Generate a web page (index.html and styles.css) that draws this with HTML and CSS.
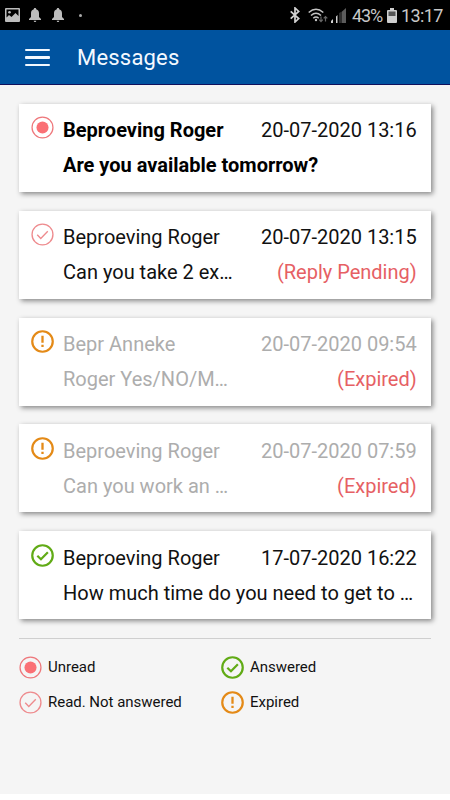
FILE: index.html
```html
<!DOCTYPE html>
<html lang="en">
<head>
<meta charset="utf-8">
<title>Messages</title>
<link rel="stylesheet" href="styles.css">
</head>
<body>
<svg width="0" height="0" class="defs" aria-hidden="true">
  <symbol id="unread" viewBox="0 0 24 24"><circle cx="12" cy="12" r="10.9" fill="none" stroke="#ee777b" stroke-width="1.3"/><circle cx="12" cy="12" r="6.3" fill="#fa7075"/></symbol>
  <symbol id="read" viewBox="0 0 24 24"><circle cx="12" cy="12" r="10.9" fill="none" stroke="#ee8b8e" stroke-width="1.4"/><path d="M6.5 12.3l3.7 3.8 7.3-7.5" fill="none" stroke="#ee8b8e" stroke-width="1.4"/></symbol>
  <symbol id="expired" viewBox="0 0 24 24"><circle cx="12" cy="12" r="10.7" fill="none" stroke="#e48a17" stroke-width="2.3"/><path d="M12 6v7.4M12 15.4v2.3" fill="none" stroke="#e48a17" stroke-width="2.4"/></symbol>
  <symbol id="answered" viewBox="0 0 24 24"><circle cx="12" cy="12" r="10.7" fill="none" stroke="#61ab16" stroke-width="2.3"/><path d="M6.6 12.2l3.8 3.7 7.2-7.4" fill="none" stroke="#61ab16" stroke-width="2.3"/></symbol>
  <symbol id="bell" viewBox="0 0 12 14"><path d="M6 0c.8 0 1.2.5 1.2 1.2C9.300 1.800 10 3.500 10 5.500V9l2 2v1H0v-1l2-2V5.500c0-2 .7-3.700 2.800-4.300C4.800.5 5.200 0 6 0zM4.700 12.800h2.600C7.200 13.600 6.700 14 6 14s-1.200-.4-1.300-1.200z" fill="#bdbdbd"/></symbol>
</svg>

<div class="status">
  <div class="notices">
    <svg class="photo" viewBox="0 0 15 14"><path fill-rule="evenodd" d="M1 0h13q1 0 1 1v12q0 1-1 1H1q-1 0-1-1V1q0-1 1-1zm.5 1.500v8L4 7l2.500 2 4-4 3 3V1.500z" fill="#bdbdbd"/><circle cx="4.500" cy="4.200" r="1.300" fill="#bdbdbd"/></svg>
    <svg class="bell"><use href="#bell"/></svg>
    <svg class="bell"><use href="#bell"/></svg>
    <i class="dot"></i>
  </div>
  <div class="system">
    <svg class="bluetooth" viewBox="0 0 10 16"><path d="M.7 4.300l8 7.200L5 15V1l3.700 3.500-8 7.200" fill="none" stroke="#d2d2d2" stroke-width="1.700"/></svg>
    <svg class="wifi" viewBox="0 0 20 15"><g fill="none" stroke="#c4c4c4" stroke-width="1.500"><path d="M.7 4.500q7.300-6.500 14.600 0M3 7.500q5-4.500 10 0M5.300 10.200q2.700-2.400 5.400 0"/></g><circle cx="8" cy="12" r="1.200" fill="#c4c4c4"/><path d="M13 8.500v5m-1.800-1.800L13 13.600l1.800-1.900M17.500 13.500v-5m-1.800 1.900l1.800-1.900 1.800 1.900" stroke="#666" fill="none" stroke-width="1.200"/></svg>
    <svg class="signal" viewBox="0 0 15 15"><path d="M0 15v-2l2-2v4zM5 15V8.500l1.500-1.500V15z" fill="#d0d0d0"/><path d="M8.500 15V5l1-1v11zM10.500 15V4l4.500-4v15z" fill="#5b5b5b"/></svg>
    <span class="percent">43%</span>
    <svg class="battery" viewBox="0 0 10 15"><path d="M3 0h4v2h2q1 0 1 1v11q0 1-1 1H1q-1 0-1-1V3q0-1 1-1h2z" fill="#cfcfcf"/><path d="M1.500 3.500h7v4.500h-7z" fill="#555"/></svg>
    <span class="clock">13:17</span>
  </div>
</div>

<header class="bar">
  <div class="menu"><i></i><i></i><i></i></div>
  <h1>Messages</h1>
</header>

<main>
  <article class="card unread">
    <svg class="icon"><use href="#unread"/></svg>
    <div class="body">
      <div class="row"><span class="name">Beproeving Roger</span><time>20-07-2020 13:16</time></div>
      <div class="row"><span class="subject">Are you available tomorrow?</span></div>
    </div>
  </article>
  <article class="card">
    <svg class="icon"><use href="#read"/></svg>
    <div class="body">
      <div class="row"><span class="name">Beproeving Roger</span><time>20-07-2020 13:15</time></div>
      <div class="row"><span class="subject">Can you take 2 ex…</span><span class="state">(Reply Pending)</span></div>
    </div>
  </article>
  <article class="card expired">
    <svg class="icon"><use href="#expired"/></svg>
    <div class="body">
      <div class="row"><span class="name">Bepr Anneke</span><time>20-07-2020 09:54</time></div>
      <div class="row"><span class="subject">Roger Yes/NO/M…</span><span class="state">(Expired)</span></div>
    </div>
  </article>
  <article class="card expired">
    <svg class="icon"><use href="#expired"/></svg>
    <div class="body">
      <div class="row"><span class="name">Beproeving Roger</span><time>20-07-2020 07:59</time></div>
      <div class="row"><span class="subject">Can you work an …</span><span class="state">(Expired)</span></div>
    </div>
  </article>
  <article class="card">
    <svg class="icon"><use href="#answered"/></svg>
    <div class="body">
      <div class="row"><span class="name">Beproeving Roger</span><time>17-07-2020 16:22</time></div>
      <div class="row"><span class="subject">How much time do you need to get to …</span></div>
    </div>
  </article>

  <footer class="legend">
    <div class="key"><svg class="icon"><use href="#unread"/></svg>Unread</div>
    <div class="key"><svg class="icon"><use href="#answered"/></svg>Answered</div>
    <div class="key"><svg class="icon"><use href="#read"/></svg>Read. Not answered</div>
    <div class="key"><svg class="icon"><use href="#expired"/></svg>Expired</div>
  </footer>
</main>
</body>
</html>
```
FILE: styles.css
```css
* { box-sizing: border-box; }
body { margin: 0; height: 800px; overflow: hidden; background: #fff; font-family: Roboto, sans-serif; color: #111; }
svg { display: block; flex: none; }
.defs { position: absolute; }

.status { height: 30px; background: #000; display: flex; justify-content: space-between; padding: 0 8px 0 5px; }
.notices, .system { display: flex; align-items: center; }
.photo { width: 15px; height: 14px; }
.bell { width: 12px; height: 14px; margin-left: 9px; }
.bell + .bell { margin-left: 11px; }
.dot { width: 3px; height: 3px; border-radius: 50%; background: #aaa; margin-left: 15px; }
.bluetooth { width: 10px; height: 16px; margin-right: 8px; }
.wifi { width: 20px; height: 15px; margin-right: 3px; }
.signal { width: 15px; height: 15px; margin-right: 6px; }
.percent, .clock { font-size: 18px; line-height: 30px; color: #c8c8c8; white-space: nowrap; padding-top: 1px; }
.percent { width: 35px; letter-spacing: -1.1px; }
.clock { width: 41px; letter-spacing: -0.6px; }
.battery { width: 10px; height: 15px; margin-right: 4px; }

.bar { height: 55px; background: #00539f; border-bottom: 1px solid #10105c; display: flex; align-items: center; padding-left: 25px; }
.menu { width: 25px; display: flex; flex-direction: column; gap: 5px; margin-top: 1px; }
.menu i { height: 2.600px; border-radius: 1px; background: #f2f8ff; }
h1 { margin: 1px 0 0 27px; font-size: 22px; font-weight: 400; letter-spacing: 0.2px; color: #f4f9ff; }

main { height: 709px; background: #f5f5f5; padding: 19px 19px 0; }
.card { height: 88px; margin-bottom: 18.800px; background: #fff; display: flex; padding: 9.350px 14.300px 0 12px; box-shadow: 2px 2px 5px rgba(0, 0, 0, .45); }
.icon { width: 23px; height: 23px; overflow: visible; }
.card .icon { margin-top: 3px; }
.body { flex: 1; min-width: 0; margin-left: 9px; }
.row { display: flex; justify-content: space-between; height: 35px; line-height: 35px; font-size: 20px; white-space: nowrap; }
.unread .name, .unread .subject { font-weight: 700; color: #000; }
.expired .name, .expired .subject, .expired time { color: #adadad; }
.row .state { color: #e66064; }

.legend { border-top: 1px solid #cfcfcf; display: grid; grid-template-columns: 202px 1fr; grid-auto-rows: 35px; padding-top: 11px; font-size: 15px; }
.key { display: flex; align-items: center; gap: 6px; letter-spacing: -0.020px; }
```
